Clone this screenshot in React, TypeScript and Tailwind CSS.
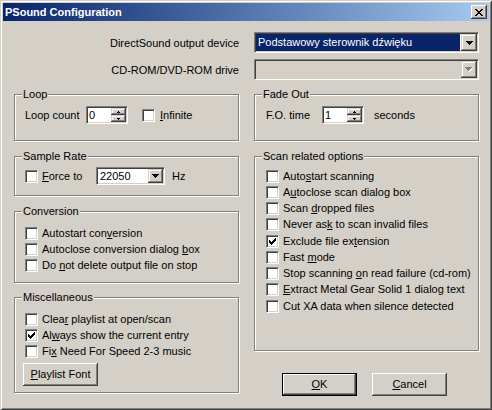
import React from 'react';

const sunken =
  'border border-t-[#808080] border-l-[#808080] border-b-white border-r-white shadow-[inset_1px_1px_0_#404040,inset_-1px_-1px_0_#d4d0c8]';
const raisedSmall =
  'shadow-[inset_-1px_-1px_0_#404040,inset_1px_1px_0_#d4d0c8,inset_-2px_-2px_0_#808080,inset_2px_2px_0_#fff]';
const raisedBtn =
  'shadow-[inset_-1px_-1px_0_#404040,inset_1px_1px_0_#fff,inset_-2px_-2px_0_#808080,inset_2px_2px_0_#d4d0c8]';

const CheckMark = () => (
  <svg width="7" height="7" viewBox="0 0 7 7" shapeRendering="crispEdges">
    <path
      d="M0 2h1v3H0zM1 3h1v3H1zM2 4h1v3H2zM3 3h1v3H3zM4 2h1v3H4zM5 1h1v3H5zM6 0h1v3H6z"
      fill="#000"
    />
  </svg>
);

const DownArrow = ({ color = '#000' }: { color?: string }) => (
  <svg width="7" height="4" viewBox="0 0 7 4" shapeRendering="crispEdges">
    <path d="M0 0h7v1H0zM1 1h5v1H1zM2 2h3v1H2zM3 3h1v1H3z" fill={color} />
  </svg>
);

const DisabledArrow = () => (
  <svg width="8" height="5" viewBox="0 0 8 5" shapeRendering="crispEdges">
    <path d="M1 1h7v1H1zM2 2h5v1H2zM3 3h3v1H3zM4 4h1v1H4z" fill="#fff" />
    <path d="M0 0h7v1H0zM1 1h5v1H1zM2 2h3v1H2zM3 3h1v1H3z" fill="#808080" />
  </svg>
);

const SpinUp = () => (
  <svg width="3" height="2" viewBox="0 0 3 2" shapeRendering="crispEdges">
    <path d="M1 0h1v1H1zM0 1h3v1H0z" fill="#000" />
  </svg>
);

const SpinDown = () => (
  <svg width="3" height="2" viewBox="0 0 3 2" shapeRendering="crispEdges">
    <path d="M0 0h3v1H0zM1 1h1v1H1z" fill="#000" />
  </svg>
);

const CloseX = () => (
  <svg width="8" height="7" viewBox="0 0 8 7" shapeRendering="crispEdges">
    <path
      d="M0 0h2v1H0zM6 0h2v1H6zM1 1h2v1H1zM5 1h2v1H5zM2 2h4v1H2zM3 3h2v1H3zM2 4h4v1H2zM1 5h2v1H1zM5 5h2v1H5zM0 6h2v1H0zM6 6h2v1H6z"
      fill="#000"
    />
  </svg>
);

const Box = ({ checked }: { checked?: boolean }) => (
  <div className={`w-[13px] h-[13px] shrink-0 bg-white flex items-center justify-center ${sunken}`}>
    {checked && <CheckMark />}
  </div>
);

const Check = ({ label, checked }: { label: React.ReactNode; checked?: boolean }) => (
  <div className="h-[16.25px] flex items-center">
    <Box checked={checked} />
    <span className="ml-[4px] whitespace-nowrap">{label}</span>
  </div>
);

const Group = ({
  title,
  className,
  children,
}: {
  title: string;
  className: string;
  children?: React.ReactNode;
}) => (
  <div className={`relative border border-[#808080] shadow-[inset_1px_1px_0_#fff,1px_1px_0_#fff] ${className}`}>
    <span className="absolute left-[7px] -top-[7px] bg-[#d4d0c8] px-[1px] leading-[13px] whitespace-nowrap">
      {title}
    </span>
    {children}
  </div>
);

const Spinner = ({ value }: { value: string }) => (
  <div className={`w-[42px] h-[18px] bg-white flex p-[1px] ${sunken}`}>
    <span className="flex-1 pl-[1px] leading-[14px]">{value}</span>
    <div className="w-[15px] flex flex-col">
      <div className={`flex-1 bg-[#d4d0c8] flex items-center justify-center ${raisedSmall}`}>
        <SpinUp />
      </div>
      <div className={`flex-1 bg-[#d4d0c8] flex items-center justify-center ${raisedSmall}`}>
        <SpinDown />
      </div>
    </div>
  </div>
);

const Button = ({ children, isDefault }: { children: React.ReactNode; isDefault?: boolean }) => (
  <div
    className={`w-[75px] h-[23px] flex items-center justify-center bg-[#d4d0c8] ${
      isDefault ? 'border border-black' : ''
    } ${raisedBtn}`}
  >
    {children}
  </div>
);

const U = ({ children }: { children: React.ReactNode }) => <span className="underline underline-offset-[1px]">{children}</span>;

export default function App() {
  return (
    <div className="w-[492px] h-[410px] bg-[#d4d0c8] text-black text-[11px] leading-[13px] font-['Liberation_Sans',Arial,sans-serif] p-[3px] shadow-[inset_1px_1px_0_#d4d0c8,inset_-1px_-1px_0_#404040,inset_2px_2px_0_#fff,inset_-2px_-2px_0_#808080] flex flex-col">
      {/* title bar */}
      <div className="h-[18px] shrink-0 flex items-center bg-linear-to-r from-[#0a246a] to-[#a6caf0] pl-[2px] pr-[2px]">
        <span className="flex-1 text-white font-bold">PSound Configuration</span>
        <div className={`w-[16px] h-[14px] bg-[#d4d0c8] flex items-center justify-center ${raisedBtn}`}>
          <CloseX />
        </div>
      </div>

      <div className="pt-[11px] pl-[11px]">
        <div className="grid grid-cols-[225px_225px] gap-x-[15px] gap-y-[6px]">
          <div className="h-[21px] flex items-center justify-end pr-[0px] pt-[2px]">DirectSound output device</div>
          <div className={`h-[21px] bg-white flex p-[1px] ${sunken}`}>
            <div className="flex-1 bg-[#0a246a] text-white pl-[2px] flex items-center mr-[1px]">
              Podstawowy sterownik dźwięku
            </div>
            <div className={`w-[16px] bg-[#d4d0c8] flex items-center justify-center ${raisedSmall}`}>
              <DownArrow />
            </div>
          </div>

          <div className="h-[21px] flex items-center justify-end pt-[2px]">CD-ROM/DVD-ROM drive</div>
          <div className={`h-[21px] bg-[#d4d0c8] flex p-[1px] ${sunken}`}>
            <div className="flex-1" />
            <div className={`w-[16px] bg-[#d4d0c8] flex items-center justify-center ${raisedSmall}`}>
              <DisabledArrow />
            </div>
          </div>
        </div>

        <div className="grid grid-cols-[225px_225px] gap-x-[15px] mt-[14px]">
          {/* left column */}
          <div className="flex flex-col">
            <Group title="Loop" className="h-[47px]">
              <div className="flex items-center pl-[10px] pt-[11px]">
                <span className="w-[61px]">Loop count</span>
                <Spinner value="0" />
                <div className="ml-[14px] flex items-center">
                  <Box />
                  <span className="ml-[5px]">
                    <U>I</U>nfinite
                  </span>
                </div>
              </div>
            </Group>

            <Group title="Sample Rate" className="h-[40px] mt-[15px]">
              <div className="flex items-center pl-[10px] pt-[10px]">
                <Box />
                <span className="ml-[4px] w-[54px]">
                  <U>F</U>orce to
                </span>
                <div className={`w-[69px] h-[18px] bg-white flex p-[1px] ${sunken}`}>
                  <span className="flex-1 pl-[2px] leading-[14px]">22050</span>
                  <div className={`w-[15px] bg-[#d4d0c8] flex items-center justify-center ${raisedSmall}`}>
                    <DownArrow />
                  </div>
                </div>
                <span className="ml-[7px]">Hz</span>
              </div>
            </Group>

            <Group title="Conversion" className="h-[72px] mt-[15px]">
              <div className="flex flex-col pl-[10px] pt-[13px]">
                <Check label={<>Autostart con<U>v</U>ersion</>} />
                <Check label={<>Autoclose conversion dialog <U>b</U>ox</>} />
                <Check label={<>Do <U>n</U>ot delete output file on stop</>} />
              </div>
            </Group>

            <Group title="Miscellaneous" className="h-[96px] mt-[14px]">
              <div className="flex flex-col pl-[10px] pt-[13px]">
                <Check label={<>Clea<U>r</U> playlist at open/scan</>} />
                <Check checked label={<>Al<U>w</U>ays show the current entry</>} />
                <Check label={<>Fi<U>x</U> Need For Speed 2-3 music</>} />
                <div className="mt-[3px] -ml-[2px]">
                  <Button>
                    <U>P</U>laylist Font
                  </Button>
                </div>
              </div>
            </Group>
          </div>

          {/* right column */}
          <div className="flex flex-col">
            <Group title="Fade Out" className="h-[47px]">
              <div className="flex items-center pl-[11px] pt-[11px]">
                <span className="w-[56px]">F.O. time</span>
                <Spinner value="1" />
                <span className="ml-[10px]">seconds</span>
              </div>
            </Group>

            <Group title="Scan related options" className="h-[195px] mt-[15px]">
              <div className="flex flex-col pl-[11px] pt-[11px]">
                <Check label={<>Auto<U>s</U>tart scanning</>} />
                <Check label={<>A<U>u</U>toclose scan dialog box</>} />
                <Check label={<>Scan <U>d</U>ropped files</>} />
                <Check label={<>Never as<U>k</U> to scan invalid files</>} />
                <Check checked label={<>Exclude file ex<U>t</U>ension</>} />
                <Check label={<>Fast <U>m</U>ode</>} />
                <Check label={<>Stop scanning <U>o</U>n read failure (cd-rom)</>} />
                <Check label={<><U>E</U>xtract Metal Gear Solid 1 dialog text</>} />
                <Check label={<>Cut XA data when silence detected</>} />
              </div>
            </Group>

            <div className="flex gap-[15px] pl-[28px] mt-[22px]">
              <Button isDefault>
                <U>O</U>K
              </Button>
              <Button>
                <U>C</U>ancel
              </Button>
            </div>
          </div>
        </div>
      </div>
    </div>
  );
}
